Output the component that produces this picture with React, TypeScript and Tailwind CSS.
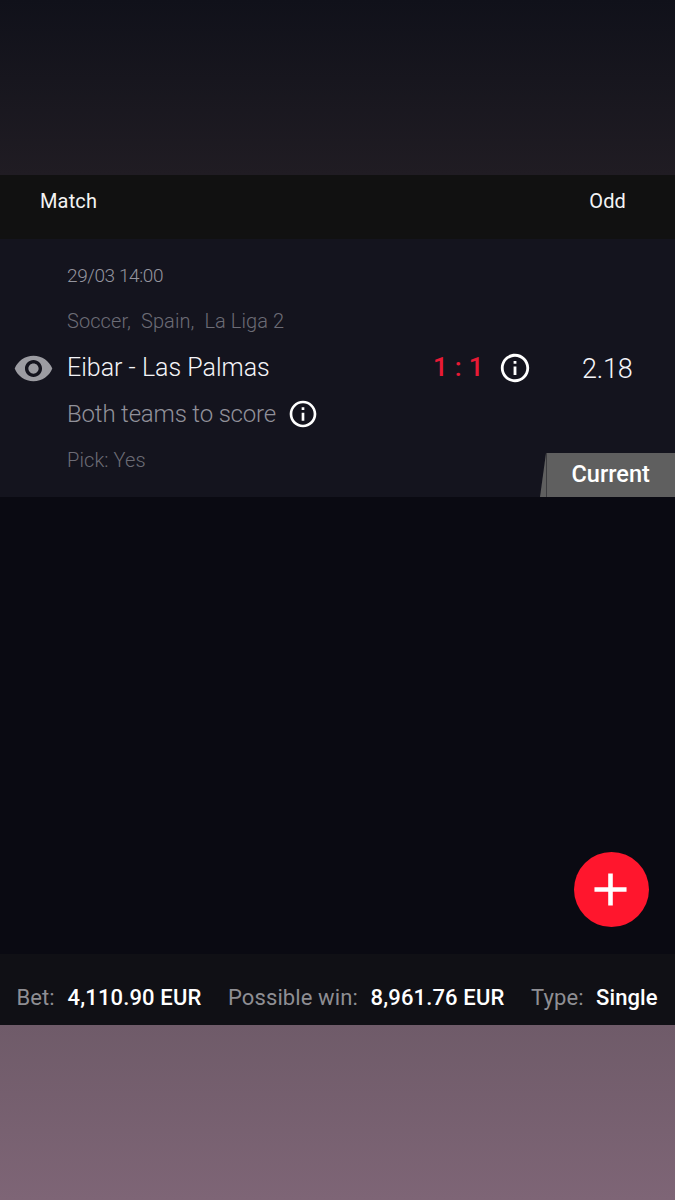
import { MdAdd, MdInfoOutline, MdRemoveRedEye } from "react-icons/md";

const match = {
  date: "29/03 14:00",
  league: ["Soccer,", "Spain,", "La Liga 2"],
  teams: "Eibar - Las Palmas",
  score: "1 : 1",
  odd: "2.18",
  market: "Both teams to score",
  pick: "Pick: Yes",
};

function TableHeader() {
  return (
    <div className="flex h-16 justify-between bg-[#111111] pt-[11px] pr-[49px] pl-10 text-[20px] leading-[30px] tracking-[0.15px] text-[#f4f4f4]">
      <span>Match</span>
      <span>Odd</span>
    </div>
  );
}

function MatchCard() {
  return (
    <section className="relative h-[258px] bg-[#14141e] pt-3.5 pl-[67px] font-light whitespace-nowrap">
      <div className="flex h-[46px] items-center text-[19px] tracking-[-0.4px] text-[#94949e]">
        {match.date}
      </div>
      <div className="flex h-[43px] items-center gap-[10px] text-[20px] tracking-[0.08px] text-[#6c6c76]">
        {match.league.map((l) => (
          <span key={l}>{l}</span>
        ))}
      </div>
      <div className="-ml-[54px] flex h-[52px] items-center">
        <MdRemoveRedEye className="size-[41px] shrink-0 text-[#9c9ca2]" />
        <span className="ml-[13px] w-[366px] pb-px text-[25px] text-[#f4f4f8]">
          {match.teams}
        </span>
        <span className="w-[65px] pb-px text-[26px] font-medium tracking-[0.3px] text-[#e81a35]">
          {match.score}
        </span>
        <MdInfoOutline className="size-[34px] shrink-0 text-white" />
        <span className="ml-[50px] pt-[3px] text-[27px] tracking-[-0.2px] text-[#f4f4f8]">
          {match.odd}
        </span>
      </div>
      <div className="flex h-10 items-center gap-[11px] text-[24px] tracking-[-0.17px] text-[#91919a]">
        <span>{match.market}</span>
        <MdInfoOutline className="size-8 text-white" />
      </div>
      <div className="flex h-[51px] items-center text-[20px] tracking-[0.1px] text-[#6c6c76]">
        {match.pick}
      </div>
      <div className="absolute right-0 bottom-0 flex h-11 w-[135px]">
        <div className="w-[6px] bg-[#5f5f5f] [clip-path:polygon(100%_0,100%_100%,0_100%)]" />
        <div className="flex flex-1 items-center border-l border-[#3c3c3f] bg-[#5f5f5f] pl-[24.5px] text-[23.5px] font-medium text-white">
          Current
        </div>
      </div>
    </section>
  );
}

function Summary() {
  return (
    <footer className="flex h-[71px] items-center bg-[#101015] pt-4 pl-[16.5px] text-[22px] tracking-[0.1px] whitespace-nowrap text-[#8e8e93]">
      <span className="w-[51px]">Bet:</span>
      <span className="w-[160.5px] font-medium tracking-[0.15px] text-white">
        4,110.90 EUR
      </span>
      <span className="w-[142.5px]">Possible win:</span>
      <span className="w-[160.5px] font-medium tracking-[0.15px] text-white">
        8,961.76 EUR
      </span>
      <span className="w-[65px]">Type:</span>
      <span className="font-medium text-white">Single</span>
    </footer>
  );
}

export default function App() {
  return (
    <div className="flex h-[1200px] w-[675px] flex-col overflow-hidden bg-[#0a0a12] font-['Roboto',sans-serif]">
      <div className="h-[175px] bg-linear-to-b from-[#10111a] to-[#201c23]" />
      <TableHeader />
      <MatchCard />
      <div className="flex h-[457px] items-end justify-end pr-[26.5px] pb-[27px]">
        <button className="flex size-[75px] items-center justify-center rounded-full bg-[#ff162d] text-white">
          <MdAdd className="mr-[2px] size-[55px]" />
        </button>
      </div>
      <Summary />
      <div className="h-[175px] bg-linear-to-b from-[#6f5b69] to-[#7e6576]" />
    </div>
  );
}
